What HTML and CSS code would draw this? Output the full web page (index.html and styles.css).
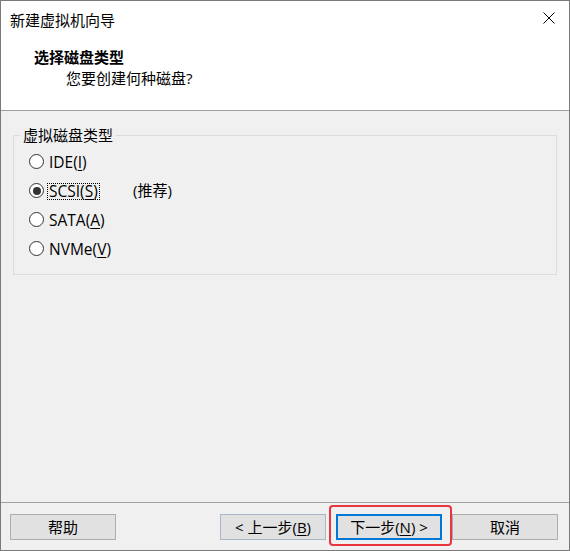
FILE: index.html
```html
<!DOCTYPE html>
<html lang="zh-CN">
<head>
<meta charset="utf-8">
<title>新建虚拟机向导</title>
<link rel="stylesheet" href="styles.css">
</head>
<body>
<div class="window">
  <div class="top">
    <div class="titlebar">
      <span class="title">新建虚拟机向导</span>
      <svg class="close" width="12" height="12" viewBox="0 0 12 12"><path d="M0.5 0.5 L11.5 11.5 M11.5 0.5 L0.5 11.5" stroke="#000" stroke-width="1" fill="none"/></svg>
    </div>
    <div class="header">
      <div class="h-title">选择磁盘类型</div>
      <div class="h-sub">您要创建何种磁盘?</div>
    </div>
  </div>
  <div class="body">
    <fieldset class="group">
      <legend>虚拟磁盘类型</legend>
      <div class="opt"><span class="radio"></span><span class="label"><span class="name">IDE(<u>I</u>)</span></span></div>
      <div class="opt"><span class="radio checked"></span><span class="label"><span class="name focus">SCSI(<u>S</u>)</span></span><span class="rec">(推荐)</span></div>
      <div class="opt"><span class="radio"></span><span class="label"><span class="name">SATA(<u>A</u>)</span></span></div>
      <div class="opt"><span class="radio"></span><span class="label"><span class="name">NVMe(<u>V</u>)</span></span></div>
    </fieldset>
  </div>
  <div class="footer">
    <button class="btn">帮助</button>
    <div class="spacer"></div>
    <button class="btn prev">&lt; 上一步(<u>B</u>)</button>
    <div class="next-wrap">
      <button class="btn default">下一步(<u>N</u>) &gt;</button>
      <span class="mark"></span>
    </div>
    <button class="btn">取消</button>
  </div>
</div>
</body>
</html>
```

FILE: styles.css
```css
* { box-sizing: border-box; }
html, body { margin: 0; padding: 0; }
body {
  font-family: "Open Sans", "Noto Sans CJK SC", sans-serif;
  font-size: 15px;
  color: #000;
  background: #f0f0f0;
}
.window {
  width: 570px;
  height: 551px;
  border: 1px solid #7a7a7a;
  display: flex;
  flex-direction: column;
  background: #f0f0f0;
}
.top {
  height: 110px;
  background: #fff;
  border-bottom: 1px solid #a0a0a0;
  flex: none;
}
.titlebar {
  height: 30px;
  display: flex;
  align-items: flex-start;
  padding: 9px 14px 0 9px;
}
.title { line-height: 20px; }
.close { margin-left: auto; margin-top: 2px; display: block; }
.header { padding: 16px 0 0 33px; }
.h-title { font-weight: 700; line-height: 21px; }
.h-sub { line-height: 20px; margin-left: 32px; }
.body {
  flex: 1;
  padding: 14px 12px 0 12px;
}
.group {
  margin: 0;
  min-width: 0;
  border: 1px solid #dcdcdc;
  padding: 2px 6px 11px 6px;
}
.group legend {
  padding: 0 3px;
  line-height: 20px;
}
.opt {
  height: 29px;
  display: flex;
  align-items: center;
  padding-left: 9px;
}
.radio {
  width: 15px;
  height: 15px;
  border: 1px solid #333;
  border-radius: 50%;
  background: #fff;
  display: flex;
  align-items: center;
  justify-content: center;
  flex: none;
}
.radio.checked::after {
  content: "";
  width: 8px;
  height: 8px;
  border-radius: 50%;
  background: #333;
}
.label { width: 86px; margin-left: 3px; flex: none; }
.name {
  display: inline-block;
  padding: 0 1px;
  border: 1px dotted transparent;
  line-height: 15px;
  font-size: 15.5px;
}
.name.focus { border-color: #000; }
u { text-underline-offset: 2px; }
.rec { line-height: 17px; }
.footer {
  height: 48px;
  flex: none;
  border-top: 1px solid #a0a0a0;
  display: flex;
  align-items: flex-start;
  padding: 11px 11px 0 9px;
  gap: 10px;
}
.spacer { flex: 1; }
.btn {
  width: 106px;
  height: 26px;
  margin: 0;
  padding: 0;
  font: inherit;
  line-height: 20px;
  color: #000;
  background: #e1e1e1;
  border: 1px solid #adadad;
  border-radius: 0;
}
.btn.prev { border-color: #a9b6c6; }
.btn.default { border: 2px solid #0078d7; }
.next-wrap { position: relative; width: 106px; height: 26px; }
.mark {
  position: absolute;
  left: -7px;
  top: -9px;
  width: 123px;
  height: 41px;
  border: 2px solid #e8363d;
  border-radius: 4px;
  pointer-events: none;
}
```
